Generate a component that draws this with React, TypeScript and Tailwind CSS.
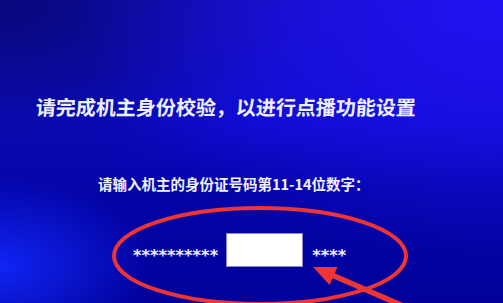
export default function App() {
  return (
    <div
      className="relative h-[303px] w-[503px] overflow-hidden font-['Noto_Sans_CJK_SC',sans-serif] font-bold text-[#eef0ff] bg-[radial-gradient(ellipse_30%_30%_at_0%_88%,#1024f4_0%,rgba(16,36,244,0)_100%),radial-gradient(ellipse_at_100%_0%,#2212f4_0%,rgba(34,18,244,0)_60%),radial-gradient(ellipse_at_0%_0%,#08087c_0%,rgba(8,8,124,0)_45%),linear-gradient(to_bottom,#0e0eb6_0%,#0b0bcc_38%,#0404a8_62%,#01019a_100%)]"
    >
      <div className="flex flex-col">
        <div className="mt-[93px] ml-[36px] text-[20px] leading-[28px] -skew-x-3 whitespace-nowrap">
          请完成机主身份校验，以进行点播功能设置
        </div>
        <div className="mt-[53px] ml-[98px] text-[14.5px] leading-[20px] whitespace-nowrap">
          请输入机主的身份证号码第11-14位数字：
        </div>
        <div className="mt-[39px] ml-[133px] flex items-center">
          <span className="text-[16.3px] leading-[17px] translate-y-[5px] font-['DejaVu_Sans',sans-serif]">**********</span>
          <div className="ml-[8px] h-[34px] w-[77px] bg-white border border-[#8a8ac8]" />
          <span className="ml-[9px] text-[16.3px] leading-[17px] translate-y-[5px] font-['DejaVu_Sans',sans-serif]">****</span>
        </div>
      </div>
      <svg className="absolute left-0 top-0" width="503" height="303" viewBox="0 0 503 303">
        <ellipse cx="260" cy="256" rx="146" ry="48" fill="none" stroke="#ef3434" strokeWidth="4" />
        <line x1="332" y1="275" x2="440" y2="322" stroke="#ef3434" strokeWidth="5.5" />
        <polygon points="313,267 329.6,285 337.5,267" fill="#ef3434" />
      </svg>
    </div>
  );
}
